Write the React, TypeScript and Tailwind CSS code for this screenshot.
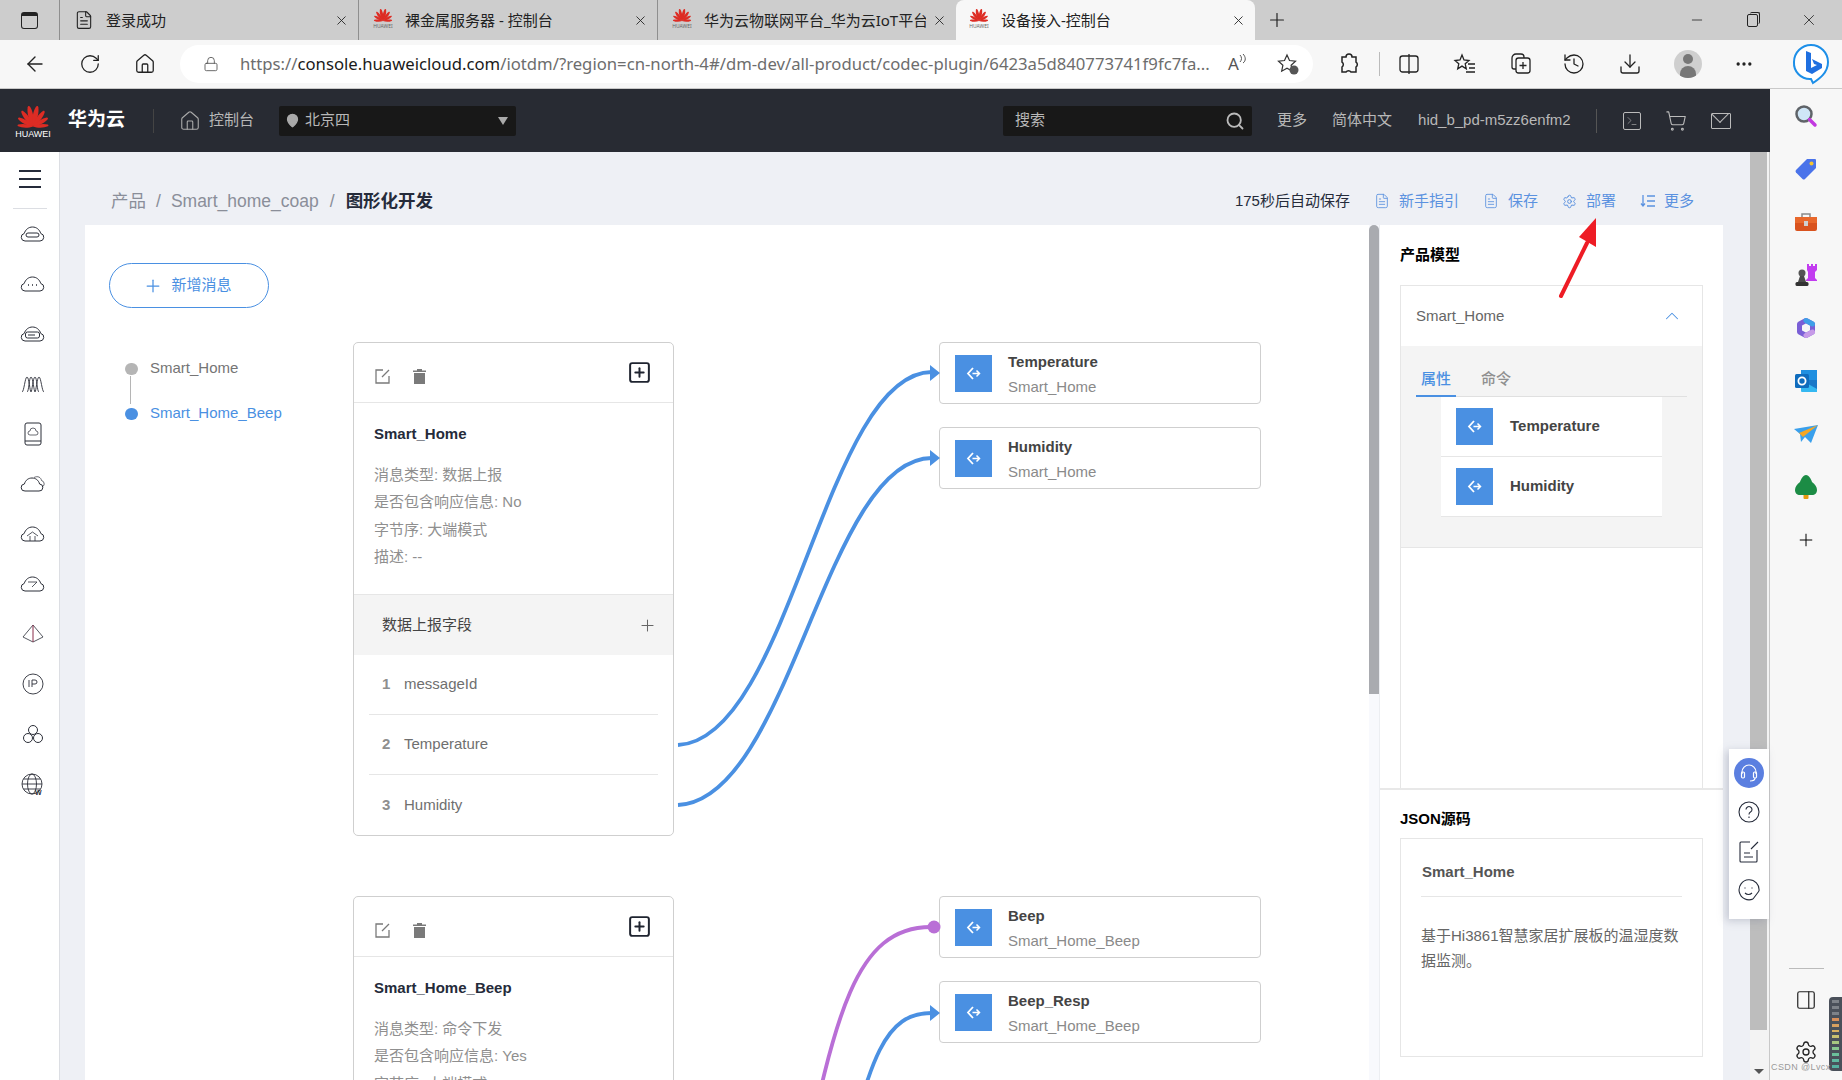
import React from "react";
import {
  ArrowLeft,
  ChevronUp,
  Download,
  FileText,
  History,
  Home,
  Lock,
  MapPin,
  Minus,
  MoreHorizontal,
  PanelRight,
  Plus,
  RotateCw,
  Search,
  Settings,
  ShoppingCart,
  SquarePlus,
  Terminal,
  X,
} from "lucide-react";

const petals = [
  { a: -86, l: 0.74 },
  { a: -60, l: 0.82 },
  { a: -36, l: 0.92 },
  { a: -12, l: 1 },
  { a: 12, l: 1 },
  { a: 36, l: 0.92 },
  { a: 60, l: 0.82 },
  { a: 86, l: 0.74 },
];

const HuaweiMark = ({ w, h }: { w: number; h: number }) => (
  <svg width={w} height={h} viewBox="0 0 34 24">
    {petals.map((p) => (
      <path
        key={p.a}
        d="M17 23C14 17 13.800 8 15.800 3C16.300 1.800 17.700 1.800 18.200 3C20.200 8 20 17 17 23Z"
        fill="#dd2c24"
        transform={`rotate(${p.a} 17 23) translate(17 23) scale(${p.l}) translate(-17 -23)`}
      />
    ))}
  </svg>
);

const Favicon = () => (
  <div className="flex h-[26px] w-[20px] shrink-0 flex-col items-center">
    <HuaweiMark w={20} h={15} />
    <span className="mt-[1px] text-[5px] leading-[6px] text-[#666]">HUAWEI</span>
  </div>
);

const ChromeTab = ({ title, doc, active }: { title: string; doc?: boolean; active?: boolean }) => (
  <div
    className={`flex h-10 w-[299px] items-center pr-[9px] ${
      active ? "rounded-t-[8px] bg-[#f7f7f7] pl-[13px]" : "border-l border-[#8f8f8f] pl-[14px]"
    }`}
  >
    <div className="flex w-[20px] justify-center">
      {doc ? <FileText size={20} strokeWidth={1.3} className="text-[#222]" /> : <Favicon />}
    </div>
    <span className="ml-[12px] flex-1 overflow-hidden text-[15px] whitespace-nowrap text-[#222]">{title}</span>
    <X size={15} strokeWidth={1.4} className="ml-[6px] shrink-0 text-[#222]" />
  </div>
);

const Cloud = ({ children }: { children?: React.ReactNode }) => (
  <svg width="25" height="18" viewBox="0 0 25 18" fill="none" stroke="#2b2e38" strokeWidth="1">
    <path d="M5 16h15a3.800 3.800 0 0 0 .8-7.500C19.600 4.600 16.400 2 12.500 2S5.400 4.600 4.200 8.500A3.800 3.800 0 0 0 5 16Z" />
    {children}
  </svg>
);

const navIcons: React.ReactNode[] = [
  <Cloud>
    <rect x="6" y="8" width="13" height="4" rx="2" />
  </Cloud>,
  <Cloud>
    <path d="M8 10h1M12 10h1M16 10h1" strokeWidth="1.600" />
  </Cloud>,
  <Cloud>
    <rect x="5.500" y="7" width="14" height="6" rx="2" />
    <path d="M8 10h7" />
  </Cloud>,
  <svg width="24" height="18" viewBox="0 0 24 18" fill="none" stroke="#2b2e38" strokeWidth=".9">
    <path d="M1 17C3 17 4 2 6 2s3 15 4 15 2-15 4-15 2 15 4 15" />
    <path d="M6 17C8 17 8 2 10 2s3 15 4 15 2-15 4-15 3 15 5 15" />
  </svg>,
  <svg width="18" height="24" viewBox="0 0 18 24" fill="none" stroke="#2b2e38">
    <rect x="1" y="1" width="16" height="22" rx="2" />
    <path d="M1 19h16" />
    <path d="M6 13h6a2 2 0 0 0 0-4 3 3 0 0 0-6 0 2 2 0 0 0 0 4Z" strokeWidth=".7" />
  </svg>,
  <svg width="25" height="18" viewBox="0 0 25 18" fill="none" stroke="#2b2e38">
    <path d="M5 16h14a3.500 3.500 0 0 0 .6-7C18.500 5 15.500 3 12 3S5.500 5 4.400 9A3.500 3.500 0 0 0 5 16Z" />
    <path d="M14 2.500c4-2 7 0 7.500 3a3.500 3.500 0 0 1 1.500 6" strokeWidth=".7" />
  </svg>,
  <Cloud>
    <path d="M7 11l5.500-4 5.500 4M10 11v5M15 11v5" strokeWidth=".8" />
  </Cloud>,
  <Cloud>
    <path d="M8 7h9l-5 5" strokeWidth=".8" />
  </Cloud>,
  <svg width="22" height="20" viewBox="0 0 22 20" fill="none" stroke="#2b2e38">
    <path d="M11 1L1 13l10 5 10-5L11 1Z" strokeWidth=".8" />
    <path d="M11 1v17" stroke="#8a2d4b" />
  </svg>,
  <svg width="22" height="22" viewBox="0 0 22 22" fill="none" stroke="#2b2e38">
    <circle cx="11" cy="11" r="10" strokeWidth=".9" />
    <path d="M7 7v7M10 14V7h3a2 2 0 0 1 0 4h-3" strokeWidth=".9" />
  </svg>,
  <svg width="22" height="20" viewBox="0 0 22 20" fill="none" stroke="#2b2e38">
    <circle cx="11" cy="6" r="4.500" />
    <circle cx="6" cy="14" r="4.500" />
    <circle cx="16" cy="14" r="4.500" />
  </svg>,
  <svg width="23" height="23" viewBox="0 0 23 23" fill="none" stroke="#2b2e38" strokeWidth=".9">
    <circle cx="11" cy="11" r="10" />
    <ellipse cx="11" cy="11" rx="4.500" ry="10" />
    <path d="M1 11h20M2.500 6h17M2.500 16h17" />
    <text x="14" y="22" fontSize="7" fontWeight="700" stroke="none" fill="#2b2e38">W</text>
  </svg>,
];

const ToPort = () => (
  <div className="flex h-[37px] w-[37px] shrink-0 items-center justify-center bg-[#4a90e2]">
    <svg width="15" height="15" viewBox="0 0 15 15" fill="none" stroke="#fff" strokeWidth="1.800">
      <path d="M7 2L2 7.500 7 13" />
      <path d="M6.500 7.500h7M10.500 4.500l3 3-3 3" strokeWidth="1.500" />
    </svg>
  </div>
);

const TargetBox = ({ name, parent }: { name: string; parent: string }) => (
  <div className="flex h-[62px] items-center rounded-[4px] border border-[#cfcfcf] bg-white pl-[15px]">
    <ToPort />
    <div className="ml-[16px] pt-[3px]">
      <div className="text-[15px] leading-[20px] font-bold text-[#444]">{name}</div>
      <div className="mt-[5px] text-[15px] leading-[20px] text-[#8a8a8a]">{parent}</div>
    </div>
  </div>
);

type MsgCardProps = {
  name: string;
  info: string[];
  section: string;
  fields: string[];
};

const MsgCard = ({ name, info, section, fields }: MsgCardProps) => (
  <div className="w-[321px] shrink-0 rounded-[5px] border border-[#cfcfcf] bg-white">
    <div className="flex h-[60px] items-center justify-between border-b border-[#e6e6e6] pr-[21px] pl-[21px]">
      <div className="flex items-center gap-[23px] pt-[8px] text-[#7a7a7a]">
        <svg width="15" height="15" viewBox="0 0 15 15" fill="none" stroke="currentColor" strokeWidth="1.300">
          <path d="M8 1H1v13h13V7M7 8l7-7" />
        </svg>
        <svg width="13" height="15" viewBox="0 0 13 15" fill="currentColor">
          <path d="M4 0h5v1.500h4V3H0V1.500h4ZM1 4h11v11H1Z" />
        </svg>
      </div>
      <SquarePlus size={25} strokeWidth={1.900} className="text-[#1f2430]" />
    </div>
    <div className="h-[191px] pt-[21px] pl-[20px]">
      <div className="text-[15px] leading-[20px] font-bold text-[#252b3a]">{name}</div>
      <div className="mt-[17px] text-[15px] leading-[27.400px] text-[#8f8f8f]">
        {info.map((line) => (
          <div key={line}>{line}</div>
        ))}
      </div>
    </div>
    <div className="flex h-[61px] items-center justify-between border-t border-[#e6e6e6] bg-[#f4f4f4] pr-[16px] pl-[28px]">
      <span className="text-[15px] text-[#444]">{section}</span>
      <Plus size={19} strokeWidth={1.300} className="text-[#666]" />
    </div>
    <div className="mx-[15px]">
      {fields.map((f, i) => (
        <div
          key={f}
          className={`flex h-[60px] items-center pl-[13px] text-[15px] text-[#6f6f6f] ${
            i < fields.length - 1 ? "border-b border-[#e6e6e6]" : ""
          }`}
        >
          <span className="w-[22px] font-bold text-[#8f8f8f]">{i + 1}</span>
          <span>{f}</span>
        </div>
      ))}
    </div>
  </div>
);

const Group = ({ card, targets }: { card: MsgCardProps; targets: string[][] }) => (
  <div className="flex">
    <MsgCard {...card} />
    <div className="ml-[265px] flex w-[322px] flex-col gap-[23px]">
      {targets.map(([n, p]) => (
        <TargetBox key={n} name={n} parent={p} />
      ))}
    </div>
  </div>
);

const ActionLink = ({ icon, label }: { icon: React.ReactNode; label: string }) => (
  <div className="flex items-center gap-[9px] text-[#5b92e0]">
    {icon}
    <span className="text-[15px]">{label}</span>
  </div>
);

const sideIcons: React.ReactNode[] = [
  <svg width="24" height="24" viewBox="0 0 24 24" fill="none">
    <circle cx="10" cy="10" r="7.500" fill="#cfe6f7" stroke="#5f6368" strokeWidth="2.500" />
    <path d="M15.500 15.500L21 21" stroke="#c239e0" strokeWidth="3.500" strokeLinecap="round" />
  </svg>,
  <svg width="24" height="24" viewBox="0 0 24 24">
    <path d="M13 2h8a1 1 0 0 1 1 1v8L11 22a2 2 0 0 1-2.500 0L2 15.500A2 2 0 0 1 2 13Z" fill="#4a73ea" />
    <circle cx="17.500" cy="6.500" r="2" fill="#f4c430" />
  </svg>,
  <svg width="24" height="20" viewBox="0 0 24 20">
    <path d="M8 5V2h8v3" fill="none" stroke="#8a8a8a" strokeWidth="1.500" />
    <rect x="1" y="5" width="22" height="14" rx="2" fill="#d9531e" />
    <rect x="1" y="5" width="22" height="6" fill="#e8682c" />
    <rect x="10" y="9" width="4" height="5" fill="#cfcfcf" />
  </svg>,
  <svg width="24" height="24" viewBox="0 0 24 24">
    <path d="M13 1h2v2h2V1h2v2h2V1h2v6l-2 2v6l2 2v1H12v-1l2-2V9l-1-2Z" fill="#c23cf0" />
    <circle cx="8" cy="10" r="3.500" fill="#555" />
    <path d="M6 13h4l2 6H4Z" fill="#4a4a4a" />
    <rect x="1.500" y="19" width="13" height="4" rx="1.500" fill="#333" />
  </svg>,
  <svg width="24" height="24" viewBox="0 0 24 24" fill="none">
    <path d="M12 4.500L18.500 8v8L12 19.500 5.500 16V8Z" stroke="#7a5fd6" strokeWidth="5" strokeLinejoin="round" />
    <path d="M12 4.500L18.500 8" stroke="#3f9fe8" strokeWidth="5" strokeLinecap="round" />
    <path d="M18.500 16L12 19.500" stroke="#c79be8" strokeWidth="5" strokeLinecap="round" />
  </svg>,
  <svg width="24" height="24" viewBox="0 0 24 24">
    <rect x="7" y="1" width="16" height="11" fill="#1f8fe0" />
    <path d="M7 11h16v12H8a1 1 0 0 1-1-1Z" fill="#35b8f1" />
    <path d="M7 11l16 9v-9Z" fill="#1a78c8" />
    <rect x="1" y="5" width="14" height="14" rx="1.500" fill="#0f6cbd" />
    <circle cx="8" cy="12" r="3.600" fill="none" stroke="#fff" strokeWidth="1.800" />
  </svg>,
  <svg width="24" height="20" viewBox="0 0 24 20">
    <path d="M0 5L24 1 17 19 11 13 7 18 6 10Z" fill="#3aa0ec" />
    <path d="M5 9L24 1 9 13Z" fill="#f5a623" />
  </svg>,
  <svg width="24" height="26" viewBox="0 0 24 26">
    <rect x="9.500" y="19" width="5" height="6" rx="1" fill="#e79a10" />
    <path d="M12 1c3 0 5 4 6 7 3 2 5 5 5 8 0 3-2 5-5 5H6c-3 0-5-2-5-5 0-3 2-6 5-8 1-3 3-7 6-7Z" fill="#1c8c45" />
  </svg>,
  <Plus size={20} strokeWidth={1.200} className="text-black" />,
];

const meterBars = ["#7d8289", "#7d8289", "#7d8289", "#d88f5a", "#d8a060", "#d8b060", "#c8c070", "#a8c880", "#88c890", "#6bbf9a", "#5fb8a0", "#55b0a0"];

export default function App() {
  return (
    <div className="relative flex h-[1080px] w-[1842px] flex-col overflow-hidden bg-white font-['Liberation_Sans','Noto_Sans_CJK_SC',sans-serif]">
      {/* browser tabs */}
      <div className="flex h-10 shrink-0 items-center bg-[#cdcdcd] font-['Noto_Sans','Noto_Sans_CJK_SC',sans-serif]">
        <div className="flex w-[59px] justify-center">
          <div className="h-[17px] w-[17px] rounded-[3px] border-[1.500px] border-t-[4px] border-[#222]" />
        </div>
        <ChromeTab title="登录成功" doc />
        <ChromeTab title="裸金属服务器 - 控制台" />
        <ChromeTab title="华为云物联网平台_华为云IoT平台" />
        <ChromeTab title="设备接入-控制台" active />
        <Plus size={22} strokeWidth={1.300} className="ml-[11px] text-[#222]" />
        <div className="ml-auto flex items-center gap-[42px] pr-[24px] text-[#222]">
          <Minus size={16} strokeWidth={1.200} />
          <div className="relative h-[13px] w-[11px] rounded-[2px] border border-[#222]">
            <div className="absolute -top-[3px] -right-[3px] h-[12px] w-[10px] rounded-[2px] border-t border-r border-[#222]" />
          </div>
          <X size={18} strokeWidth={1.100} />
        </div>
      </div>
      {/* address bar */}
      <div className="flex h-[49px] shrink-0 items-center border-b border-[#c9c9c9] bg-[#f7f7f7] pb-[1px] pl-[23px] font-['Noto_Sans','Noto_Sans_CJK_SC',sans-serif] text-[#222]">
        <ArrowLeft size={24} strokeWidth={1.400} />
        <RotateCw size={22} strokeWidth={1.400} className="ml-[32px]" />
        <Home size={22} strokeWidth={1.400} className="ml-[33px]" />
        <div className="ml-[24px] flex h-[38px] w-[1133px] items-center rounded-full bg-white pl-[23px]">
          <Lock size={16} strokeWidth={1.300} className="text-[#555]" />
          <div className="ml-[21px] w-[975px] truncate text-[16.700px] whitespace-nowrap text-[#6d6d6d]">
            https://<span className="text-[#1a1a1a]">console.huaweicloud.com</span>
            /iotdm/?region=cn-north-4#/dm-dev/all-product/codec-plugin/6423a5d840773741f9fc7fa...
          </div>
          <span className="ml-[13px] flex items-start text-[17px] leading-[20px] text-[#555]">
            A
            <svg width="8" height="10" viewBox="0 0 8 10" fill="none" stroke="#555" strokeWidth="1">
              <path d="M1 1c2 2 2 5 0 7M4 0c3 3 3 7 0 9" />
            </svg>
          </span>
          <svg width="24" height="24" viewBox="0 0 24 24" fill="none" stroke="#333" strokeWidth="1.200" className="ml-[29px]">
            <path d="M11 3l2.500 5.500 6 .7-4.400 4 1.200 6-5.300-3-5.300 3 1.200-6-4.400-4 6-.7Z" />
            <circle cx="18" cy="18" r="4.500" fill="#555" stroke="none" />
          </svg>
        </div>
        <svg width="24" height="24" viewBox="0 0 24 24" fill="none" stroke="#222" strokeWidth="1.500" className="ml-[24px]">
          <path d="M9 5a3 3 0 0 1 6 0h4v5a3 3 0 0 1 0 5v5h-5a3 3 0 0 0-5 0H5v-5a3 3 0 0 0 0-5V5Z" />
        </svg>
        <div className="ml-[18px] h-[24px] w-[1px] bg-[#bbb]" />
        <svg width="22" height="22" viewBox="0 0 22 22" fill="none" stroke="#222" strokeWidth="1.300" className="ml-[18px]">
          <rect x="2" y="3" width="18" height="16" rx="2.500" />
          <path d="M11 1v20" />
        </svg>
        <svg width="24" height="24" viewBox="0 0 24 24" fill="none" stroke="#222" strokeWidth="1.300" className="ml-[33px]">
          <path d="M9 3l2 5 5 .5-3.800 3.300 1.100 5-4.300-2.700-4.300 2.700 1.100-5L2 8.500 7 8Z" />
          <path d="M15 12h7M16 16h6M13 20h9" />
        </svg>
        <svg width="24" height="24" viewBox="0 0 24 24" fill="none" stroke="#222" strokeWidth="1.300" className="ml-[32px]">
          <rect x="7" y="6" width="14" height="15" rx="2.500" />
          <path d="M7 17H5a2 2 0 0 1-2-2V6a4 4 0 0 1 4-4h5a3 3 0 0 1 3 3v1M14 10v7M10.500 13.500h7" />
        </svg>
        <History size={24} strokeWidth={1.300} className="ml-[29px]" />
        <Download size={24} strokeWidth={1.300} className="ml-[32px]" />
        <div className="ml-[32px] flex h-[28px] w-[28px] items-end justify-center overflow-hidden rounded-full bg-[#cfcfcf]">
          <div className="relative h-[24px] w-[16px]">
            <div className="absolute top-0 left-[3px] h-[10px] w-[10px] rounded-full bg-[#777]" />
            <div className="absolute top-[12px] left-0 h-[14px] w-[16px] rounded-t-full bg-[#777]" />
          </div>
        </div>
        <MoreHorizontal size={20} strokeWidth={2} className="ml-[32px]" />
        <div className="ml-[38px]">
          <svg width="38" height="42" viewBox="0 0 38 42" fill="none">
            <path d="M19 2a17 17 0 0 1 17 17c0 11-9 17-15 21l-2-4h-1A16 16 0 0 1 2 19 17 17 0 0 1 19 2Z" fill="#fff" stroke="#1d8fe8" strokeWidth="2" />
            <path d="M14 8l5 2v15l6-3-3-1-2-5 10 5v4l-10 6-6-3Z" fill="#1f6fe0" />
          </svg>
        </div>
      </div>

      <div className="flex min-h-0 flex-1">
        <div className="flex min-w-0 flex-1 flex-col">
          {/* console header */}
          <div className="flex h-[63px] shrink-0 items-center bg-[#282b33] pl-[16px] text-[15px] text-[#b8b8b8]">
            <div className="flex h-[36px] w-[34px] flex-col items-center">
              <HuaweiMark w={34} h={25} />
              <span className="mt-[1px] text-[9px] leading-[10px] text-white">HUAWEI</span>
            </div>
            <span className="ml-[18px] text-[19px] font-semibold text-white">华为云</span>
            <div className="ml-[28px] h-[24px] w-[1px] bg-[#444]" />
            <Home size={22} strokeWidth={1.200} className="ml-[25px] text-[#aaa]" />
            <span className="ml-[8px]">控制台</span>
            <div className="ml-[25px] flex h-[30px] w-[237px] items-center rounded-[2px] bg-[#181818] pr-[8px] pl-[6px]">
              <MapPin size={15} fill="#aaa" className="text-[#aaa]" />
              <span className="ml-[5px] flex-1">北京四</span>
              <div className="h-0 w-0 border-x-[5px] border-t-[8px] border-x-transparent border-t-[#aaa]" />
            </div>
            <div className="ml-[487px] flex h-[30px] w-[249px] items-center justify-between rounded-[2px] bg-[#181818] pr-[7px] pl-[12px]">
              <span>搜索</span>
              <Search size={20} strokeWidth={2.200} className="text-[#bbb]" />
            </div>
            <span className="ml-[25px]">更多</span>
            <span className="ml-[25px]">简体中文</span>
            <span className="ml-[26px]">hid_b_pd-m5zz6enfm2</span>
            <div className="ml-[25px] h-[24px] w-[1px] bg-[#555]" />
            <Terminal size={18} strokeWidth={1.200} className="ml-[26px] rounded-[2px] border border-[#bbb] p-[2px] text-[#bbb]" />
            <ShoppingCart size={22} strokeWidth={1.200} className="ml-[24px] text-[#bbb]" />
            <div className="relative ml-[24px] h-[16px] w-[20px] overflow-hidden rounded-[1px] border-[1.500px] border-[#bbb]">
              <div className="absolute -top-[8px] left-[1px] h-[14px] w-[14px] rotate-45 border-r-[1.500px] border-b-[1.500px] border-[#bbb]" />
            </div>
          </div>

          <div className="flex min-h-0 flex-1">
            {/* left nav */}
            <div className="flex w-[60px] shrink-0 flex-col items-center border-r border-[#dcdee3] bg-white">
              <div className="flex h-[57px] w-[34px] shrink-0 flex-col items-center justify-center gap-[6px] border-b border-[#dcdee3] pb-[3px]">
                <div className="h-[2px] w-[22px] bg-[#252b3a]" />
                <div className="h-[2px] w-[22px] bg-[#252b3a]" />
                <div className="h-[2px] w-[22px] bg-[#252b3a]" />
              </div>
              {navIcons.map((icon, i) => (
                <div key={i} className="flex h-[50px] shrink-0 items-center justify-center pl-[6px]">
                  {icon}
                </div>
              ))}
            </div>

            {/* main */}
            <div className="flex min-w-0 flex-1 flex-col bg-[#eef0f5] pr-[27px] pl-[25px]">
              <div className="flex h-[73px] shrink-0 items-end justify-between pr-[29px] pb-[12px] pl-[26px]">
                <div className="flex items-center text-[17.500px] leading-[24px] text-[#8a8e99]">
                  <span>产品</span>
                  <span className="mx-[10px]">/</span>
                  <span>Smart_home_coap</span>
                  <span className="mx-[11px]">/</span>
                  <span className="font-bold text-[#252b3a]">图形化开发</span>
                </div>
                <div className="flex items-center gap-[24px] leading-[24px]">
                  <span className="text-[15px] text-[#252b3a]">175秒后自动保存</span>
                  <ActionLink icon={<FileText size={16} strokeWidth={1.300} />} label="新手指引" />
                  <ActionLink icon={<FileText size={16} strokeWidth={1.300} />} label="保存" />
                  <ActionLink icon={<Settings size={15} strokeWidth={1.600} />} label="部署" />
                  <ActionLink
                    icon={
                      <svg width="15" height="14" viewBox="0 0 15 14" fill="none" stroke="currentColor" strokeWidth="1.300">
                        <path d="M3 1v11M1 9.500L3 12l2-2.500M7 2h8M7 7h8M7 12h8" />
                      </svg>
                    }
                    label="更多"
                  />
                </div>
              </div>

              <div className="flex min-h-0 flex-1 bg-white">
                {/* canvas */}
                <div className="relative min-w-0 flex-1 overflow-hidden pt-[38px] pl-[24px]">
                  <button className="flex h-[45px] w-[160px] items-center justify-center gap-[8px] rounded-full border border-[#4a90e2] bg-white pr-[3px] text-[15px] text-[#4a90e2]">
                    <Plus size={20} strokeWidth={1.500} />
                    新增消息
                  </button>
                  <div className="relative mt-[34px] flex">
                    <div className="w-[244px] shrink-0 pt-[4px] pl-[16px] text-[15px]">
                      <div className="relative flex h-[45px] items-center text-[#757575]">
                        <div className="h-[12px] w-[13px] rounded-full bg-[#b5b5b5]" />
                        <div className="absolute top-[30px] left-[5px] h-[28px] w-[1px] bg-[#b5b5b5]" />
                        <span className="ml-[12px]">Smart_Home</span>
                      </div>
                      <div className="flex h-[45px] items-center text-[#4a90e2]">
                        <div className="h-[12px] w-[13px] rounded-full bg-[#4a90e2]" />
                        <span className="ml-[12px]">Smart_Home_Beep</span>
                      </div>
                    </div>
                    <div className="flex flex-col gap-[60px]">
                      <Group
                        card={{
                          name: "Smart_Home",
                          info: ["消息类型: 数据上报", "是否包含响应信息: No", "字节序: 大端模式", "描述: --"],
                          section: "数据上报字段",
                          fields: ["messageId", "Temperature", "Humidity"],
                        }}
                        targets={[
                          ["Temperature", "Smart_Home"],
                          ["Humidity", "Smart_Home"],
                        ]}
                      />
                      <Group
                        card={{
                          name: "Smart_Home_Beep",
                          info: ["消息类型: 命令下发", "是否包含响应信息: Yes", "字节序: 大端模式", "描述: --"],
                          section: "命令下发字段",
                          fields: ["messageId", "Beep"],
                        }}
                        targets={[
                          ["Beep", "Smart_Home_Beep"],
                          ["Beep_Resp", "Smart_Home_Beep"],
                        ]}
                      />
                    </div>
                  </div>
                  <svg className="absolute top-0 left-0 h-[1000px] w-[1284px]" viewBox="0 0 1284 1000" fill="none">
                    <path d="M593 520C705 515 740 147 847 147" stroke="#4a90e2" strokeWidth="3.800" />
                    <path d="M855 148l-10-8v16Z" fill="#4a90e2" />
                    <path d="M593 580C705 575 740 233 847 233" stroke="#4a90e2" strokeWidth="3.800" />
                    <path d="M855 233l-10-8v16Z" fill="#4a90e2" />
                    <path d="M715 960C750 790 770 702 846 702" stroke="#b96fd6" strokeWidth="3.800" />
                    <circle cx="849" cy="702" r="6.500" fill="#b96fd6" />
                    <path d="M755 960C785 830 800 788 847 788" stroke="#4a90e2" strokeWidth="3.800" />
                    <path d="M855 788l-10-8v16Z" fill="#4a90e2" />
                  </svg>
                </div>

                {/* canvas scrollbar */}
                <div className="w-[10px] shrink-0 bg-[#f8f9fd]">
                  <div className="h-[469px] rounded-t-full bg-[#a9abb0]" />
                </div>

                {/* product model panel */}
                <div className="flex w-[344px] shrink-0 flex-col border-l border-[#eceef2]">
                  <div className="h-[563px] shrink-0 overflow-hidden px-[20px] pt-[20px]">
                    <div className="text-[15px] leading-[20px] font-bold text-black">产品模型</div>
                    <div className="mt-[20px] h-[600px] border border-[#e6e6e6]">
                      <div className="flex h-[60px] items-center justify-between pr-[19px] pl-[15px] text-[15px] text-[#666]">
                        Smart_Home
                        <ChevronUp size={22} strokeWidth={1.100} className="text-[#4a90e2]" />
                      </div>
                      <div className="h-[202px] border-b border-[#e6e6e6] bg-[#f4f4f4] pt-[17px]">
                        <div className="mx-[15px] flex h-[34px] gap-[25px] border-b border-[#e0e0e0] text-[15px]">
                          <div className="h-[34px] w-[40px] border-b-2 border-[#4a90e2] pl-[5px] leading-[32px] font-medium text-[#4a90e2]">
                            属性
                          </div>
                          <div className="leading-[32px] font-medium text-[#8f8f8f]">命令</div>
                        </div>
                        <div className="ml-[40px] w-[221px] bg-white">
                          {["Temperature", "Humidity"].map((p) => (
                            <div key={p} className="flex h-[60px] items-center border-b border-[#e6e6e6] pl-[15px]">
                              <ToPort />
                              <span className="ml-[17px] text-[15px] font-bold text-[#444]">{p}</span>
                            </div>
                          ))}
                        </div>
                      </div>
                    </div>
                  </div>
                  <div className="flex-1 border-t-2 border-[#e8e8e8] px-[20px] pt-[19px]">
                    <div className="text-[15px] leading-[20px] font-bold text-black">JSON源码</div>
                    <div className="mt-[9px] h-[219px] border border-[#e6e6e6] px-[20px] pt-[23px]">
                      <div className="border-b border-[#e6e6e6] pb-[14px] pl-[1px] text-[15px] leading-[20px] font-bold text-[#555]">
                        Smart_Home
                      </div>
                      <div className="mt-[26px] text-[15px] leading-[25px] text-[#666]">
                        基于Hi3861智慧家居扩展板的温湿度数据监测。
                      </div>
                    </div>
                  </div>
                </div>
              </div>
            </div>

            {/* page scrollbar */}
            <div className="flex w-[20px] shrink-0 flex-col border-r border-[#c8c8c8] bg-[#f3f3f3] pr-[2px]">
              <div className="h-[878px] w-[17px] bg-[#bdbdbd]" />
              <div className="mt-auto mb-[6px] ml-[4px] h-0 w-0 border-x-[5px] border-t-[5px] border-x-transparent border-t-[#555]" />
            </div>
          </div>
        </div>

        {/* browser sidebar */}
        <div className="flex w-[72px] shrink-0 flex-col items-center bg-[#f7f7f7] pb-[16px]">
          {sideIcons.map((icon, i) => (
            <div key={i} className="flex h-[53px] shrink-0 items-center justify-center">
              {icon}
            </div>
          ))}
          <div className="mt-auto h-[1px] w-[35px] bg-[#bbb]" />
          <PanelRight size={22} strokeWidth={1.300} className="mt-[20px] text-[#222]" />
          <Settings size={24} strokeWidth={1.300} className="mt-[29px] text-[#222]" />
        </div>
      </div>

      {/* floating help */}
      <div className="absolute top-[749px] left-[1729px] flex h-[170px] w-[40px] flex-col items-center bg-white pt-[9px] shadow-[-3px_2px_8px_rgba(120,125,150,0.35)]">
        <div className="flex h-[30px] w-[30px] items-center justify-center rounded-full bg-[#5b7fe0]">
          <svg width="20" height="20" viewBox="0 0 20 20" fill="none" stroke="#fff" strokeWidth="1.200">
            <path d="M3 11V9a7 7 0 0 1 14 0v2" />
            <rect x="2.500" y="9" width="3" height="6" rx="1.200" />
            <rect x="14.500" y="9" width="3" height="6" rx="1.200" />
            <path d="M16 15c0 2-2 3-5 3" />
          </svg>
        </div>
        <svg width="22" height="22" viewBox="0 0 22 22" fill="none" stroke="#252b3a" strokeWidth="1.100" className="mt-[13px]">
          <circle cx="11" cy="11" r="10" />
          <path d="M8 8.500a3 3 0 1 1 4.500 2.600c-1 .6-1.500 1.200-1.500 2.400M11 15.500v1.500" />
        </svg>
        <svg width="20" height="22" viewBox="0 0 20 22" fill="none" stroke="#252b3a" strokeWidth="1.100" className="mt-[18px]">
          <path d="M11 1H2a1 1 0 0 0-1 1v18a1 1 0 0 0 1 1h15a1 1 0 0 0 1-1V9" />
          <path d="M12 8l7-7M5 12h6M5 16h9" />
        </svg>
        <svg width="22" height="22" viewBox="0 0 22 22" fill="none" stroke="#252b3a" strokeWidth="1.100" className="mt-[16px]">
          <path d="M15 20a10 10 0 1 1 6-8" />
          <path d="M21 12l-6 8M7 8.500v1M14 8.500v1M7 14c2 2 5 2 7 0" />
        </svg>
      </div>

      {/* red arrow annotation */}
      <svg className="absolute top-[210px] left-[1550px]" width="60" height="95" viewBox="0 0 60 95" fill="none">
        <path d="M11 86L37 33" stroke="#ee1c25" strokeWidth="4" strokeLinecap="round" />
        <path d="M46 8L29 27l17 10Z" fill="#ee1c25" />
      </svg>

      {/* meter + watermark */}
      <div className="absolute top-[997px] left-[1829px] flex h-[74px] w-[13px] flex-col justify-end gap-[3px] rounded-l-[4px] bg-[#4a505a] p-[3px]">
        {meterBars.map((c, i) => (
          <div key={i} className="h-[3px] w-full" style={{ backgroundColor: c }} />
        ))}
      </div>
      <span className="absolute top-[1060px] left-[1771px] text-[9px] leading-[14px] tracking-[0.4px] text-[#9a9a9a]">
        CSDN @Lvcx
      </span>
    </div>
  );
}
